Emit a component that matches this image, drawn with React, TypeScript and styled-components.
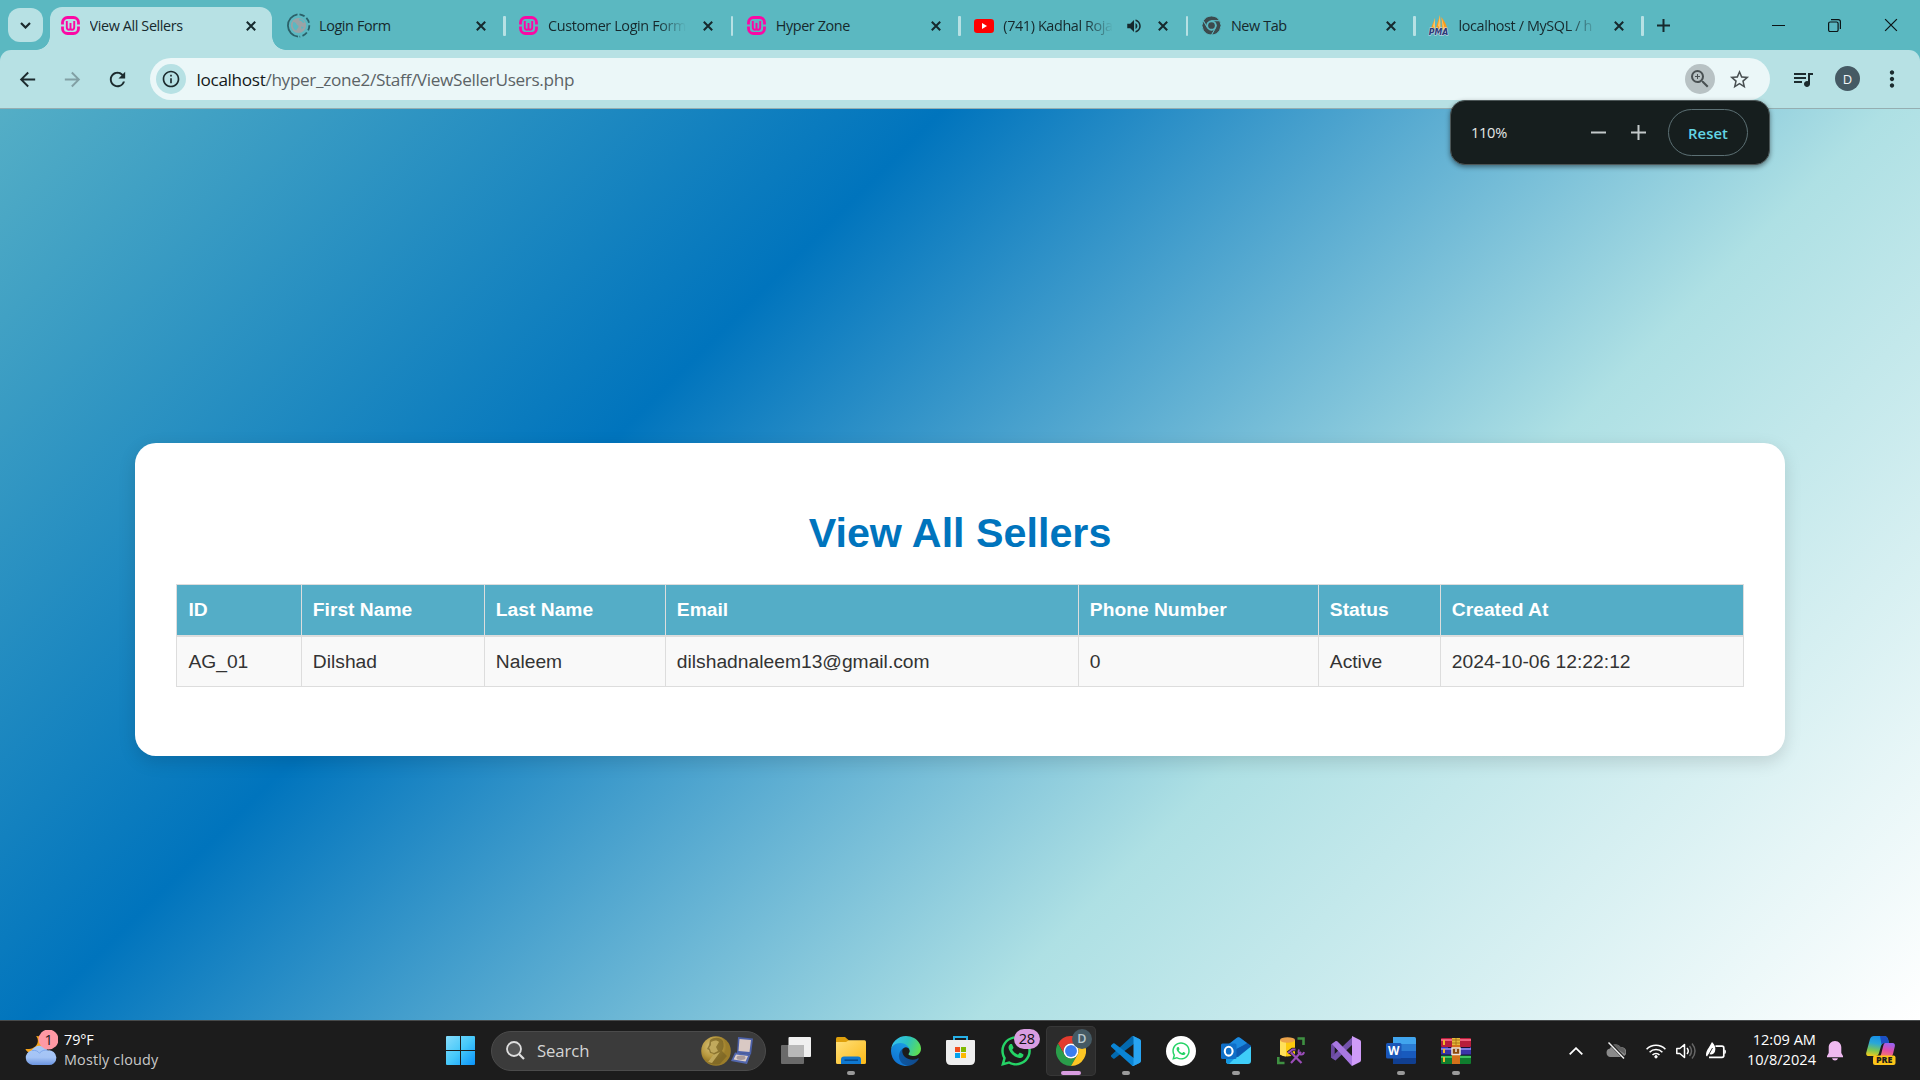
import React from "react";
import styled, { createGlobalStyle, css } from "styled-components";
import {
  MdArrowBack,
  MdArrowForward,
  MdRefresh,
  MdOutlineInfo,
  MdZoomIn,
  MdStarBorder,
  MdQueueMusic,
  MdMoreVert,
  MdVolumeUp,
} from "react-icons/md";
import { FaWhatsapp } from "react-icons/fa";

const uiFont = `"Open Sans", "Noto Sans", sans-serif`;
const pageFont = `"Liberation Sans", Arial, sans-serif`;

const GlobalStyle = createGlobalStyle`
  *, *::before, *::after { box-sizing: border-box; }
  html, body { margin: 0; padding: 0; overflow: hidden; }
  body { width: 1920px; height: 1080px; }
  svg { display: block; flex: none; }
`;

const Screen = styled.div`
  width: 1920px;
  height: 1080px;
  display: flex;
  flex-direction: column;
  position: relative;
  overflow: hidden;
  font-family: ${uiFont};
`;

/* ---------- tab strip ---------- */
const TabStrip = styled.div`
  height: 50px;
  flex: none;
  display: flex;
  background: #5bb8c1;
  color: #16292d;
`;
const TabSearch = styled.div`
  width: 35px;
  height: 34px;
  margin: 8px 7px 0 8px;
  border-radius: 12px;
  background: #b7e1e4;
  display: flex;
  align-items: center;
  justify-content: center;
`;
const tabBase = css`
  display: flex;
  align-items: center;
  flex: none;
`;
const ActiveTab = styled.div`
  ${tabBase}
  position: relative;
  width: 221.5px;
  height: 43px;
  margin: 7px 5.5px 0 0;
  padding: 0 11px 6px 10px;
  border-radius: 12px 12px 0 0;
  background: #b7e1e4;
  &::before,
  &::after {
    content: "";
    position: absolute;
    bottom: 0;
    width: 14px;
    height: 14px;
  }
  &::before {
    left: -14px;
    background: radial-gradient(circle at 0 0, transparent 13.5px, #b7e1e4 14.2px);
  }
  &::after {
    right: -14px;
    background: radial-gradient(circle at 100% 0, transparent 13.5px, #b7e1e4 14.2px);
  }
`;
const Tab = styled.div`
  ${tabBase}
  width: 227.6px;
  height: 50px;
  padding: 1px 13.5px 0 14px;
`;
const TabSeparator = styled.i`
  width: 2.5px;
  height: 20px;
  border-radius: 1px;
  background: #b7e1e4;
  margin: 0 -14.5px 0 12.5px;
  flex: none;
`;
const TabIcon = styled.span<{ $wide?: boolean }>`
  width: ${(p) => (p.$wide ? 25 : 20)}px;
  height: 25px;
  margin-left: ${(p) => (p.$wide ? -5 : 0)}px;
  margin-right: ${(p) => (p.$wide ? -1.5 : 0)}px;
  display: flex;
  align-items: center;
  justify-content: center;
  flex: none;
`;
const TabTitle = styled.span<{ $fade?: boolean }>`
  flex: 1;
  min-width: 0;
  margin: 0 8px 0 9.5px;
  overflow: hidden;
  white-space: nowrap;
  font-size: 14.4px;
  line-height: 24px;
  letter-spacing: -0.38px;
  ${(p) =>
    p.$fade &&
    css`
      mask-image: linear-gradient(90deg, #000 calc(100% - 32px), transparent calc(100% - 4px));
    `}
`;
const Audio = styled.span`
  margin-right: 10px;
`;
const NewTab = styled.div`
  width: 42px;
  display: flex;
  align-items: center;
  justify-content: center;
`;
const WindowButtons = styled.div`
  display: flex;
  align-items: center;
  gap: 43px;
  margin: 0 22px 0 auto;
  color: #0b1416;
`;

/* ---------- toolbar ---------- */
const ToolbarBack = styled.div`
  background: #5bb8c1;
  flex: none;
`;
const Toolbar = styled.div`
  height: 59px;
  border-radius: 11px 11px 0 0;
  background: #b7e1e4;
  border-bottom: 1px solid #95aeb1;
  display: flex;
  align-items: center;
  color: #1c2b2e;
`;
const NavButtons = styled.div`
  display: flex;
  width: 150px;
  padding: 0 0 0 15.5px;
  gap: 22px;
  align-items: center;
`;
const Dim = styled.span`
  color: #82a0a4;
`;
const Omnibox = styled.div`
  width: 1620px;
  height: 42px;
  border-radius: 21px;
  background: #ebf7f8;
  display: flex;
  align-items: center;
  padding: 0 19px 0 6px;
`;
const RoundChip = styled.span<{ $bg: string }>`
  width: 30px;
  height: 30px;
  border-radius: 50%;
  background: ${(p) => p.$bg};
  display: flex;
  align-items: center;
  justify-content: center;
  flex: none;
`;
const Address = styled.span`
  flex: 1;
  margin-left: 10.5px;
  font-size: 17.2px;
  letter-spacing: -0.34px;
  color: #5b6366;
  b {
    font-weight: 400;
    color: #14191a;
  }
`;
const BoxActions = styled.span`
  display: flex;
  align-items: center;
  gap: 13px;
  color: #4a5153;
`;
const ToolActions = styled.div`
  flex: 1;
  display: flex;
  align-items: center;
  padding-left: 20.5px;
`;
const Avatar = styled.span`
  width: 25px;
  height: 25px;
  border-radius: 50%;
  background: #455a64;
  color: #f2f5f6;
  font-size: 13px;
  display: flex;
  align-items: center;
  justify-content: center;
  margin: -1px 19px 0 20.5px;
`;

/* ---------- zoom bubble ---------- */
const ZoomBubble = styled.div`
  position: absolute;
  left: 1450px;
  top: 100px;
  width: 320px;
  height: 65px;
  border-radius: 15px;
  background: #161e1e;
  border: 1px solid #4c5657;
  box-shadow: 0 2px 5px rgba(0, 0, 0, 0.45);
  display: flex;
  align-items: center;
  padding: 0 21px 0 20px;
  color: #e4e8e8;
  font-size: 14.6px;
  letter-spacing: -0.3px;
`;
const ZoomLevel = styled.span`
  padding-bottom: 2px;
`;
const ZoomSteps = styled.span`
  display: flex;
  gap: 25px;
  margin: 0 22px 0 auto;
`;
const ResetButton = styled.span`
  width: 80px;
  height: 47px;
  border: 1px solid #5c7074;
  border-radius: 24px;
  color: #63d5e5;
  font-weight: 600;
  letter-spacing: 0.1px;
  font-size: 14.8px;
  display: flex;
  align-items: center;
  justify-content: center;
`;

/* ---------- web page ---------- */
const Page = styled.main`
  flex: 1;
  background: linear-gradient(135deg, #54aec6, #0074bd, #aee0e4, #ffffff);
  display: flex;
  justify-content: center;
  align-items: flex-start;
  padding-top: 334px;
  font-family: ${pageFont};
`;
const Card = styled.section`
  width: 1650px;
  height: 313px;
  border-radius: 21px;
  background: #fff;
  box-shadow: 0 5.5px 16.5px rgba(0, 0, 0, 0.13);
  padding: 65.5px 41px 0;
  display: flex;
  flex-direction: column;
  align-items: flex-start;
`;
const Heading = styled.h1`
  margin: 0 0 27.5px;
  width: 1568px;
  text-align: center;
  font-size: 41.25px;
  line-height: 48px;
  font-weight: 700;
  color: #0074bd;
`;
const Table = styled.table`
  width: 1568px;
  table-layout: fixed;
  border-collapse: separate;
  border-spacing: 0;
  border-top: 1px solid #ddd;
  border-left: 1px solid #ddd;
  font-size: 19.25px;
  line-height: 22px;
  color: #333;
`;
const cell = css`
  text-align: left;
  padding: 0 0 0 10.8px;
  border-right: 1px solid #ddd;
  &:first-child {
    padding-left: 11.4px;
  }
`;
const Th = styled.th`
  ${cell}
  height: 52px;
  background: #54adc7;
  color: #fff;
  border-bottom: 2px solid #ddd;
`;
const Td = styled.td`
  ${cell}
  height: 50px;
  background: #f9f9f9;
  border-bottom: 1px solid #ddd;
`;

/* ---------- taskbar ---------- */
const Taskbar = styled.footer`
  height: 60px;
  flex: none;
  background: #1c1c1c;
  border-top: 1px solid #474a4b;
  display: flex;
  align-items: center;
  color: #fff;
`;
const Weather = styled.div`
  width: 433px;
  padding-left: 24px;
  display: flex;
  gap: 6px;
  font-size: 14.4px;
  line-height: 20px;
  margin-top: -2px;
`;
const WeatherText = styled.div`
  display: flex;
  flex-direction: column;
  letter-spacing: -0.1px;
  span {
    color: #c9c9c9;
    letter-spacing: 0.17px;
  }
`;
const Slot = styled.div<{ $active?: boolean }>`
  position: relative;
  width: 50px;
  height: 50px;
  margin: 0 2.53px;
  border-radius: 5px;
  display: flex;
  align-items: center;
  justify-content: center;
  flex: none;
  ${(p) =>
    p.$active &&
    css`
      background: #2c2c2c;
      box-shadow: inset 0 0 0 1px #373737;
    `}
`;
const Running = styled.i<{ $active?: boolean }>`
  position: absolute;
  bottom: 1px;
  left: 50%;
  transform: translateX(-50%);
  width: ${(p) => (p.$active ? 20 : 8)}px;
  height: 4px;
  border-radius: 2px;
  background: ${(p) => (p.$active ? "#d89ce0" : "#9a9a9a")};
`;
const CountBadge = styled.span`
  position: absolute;
  left: 23px;
  top: 3.5px;
  width: 26px;
  height: 20px;
  border-radius: 10px;
  background: #d99de2;
  color: #111;
  font-size: 14.5px;
  letter-spacing: -0.3px;
  line-height: 20px;
  text-align: center;
`;
const ProfileBadge = styled.span`
  position: absolute;
  left: 26px;
  top: 3.5px;
  width: 20px;
  height: 20px;
  border-radius: 50%;
  background: #455a64;
  color: #b9c9cf;
  font-size: 12.5px;
  font-weight: 600;
  line-height: 20px;
  text-align: center;
`;
const SearchBox = styled.div`
  width: 275px;
  height: 40px;
  margin: 0 2.6px 0 2.5px;
  border-radius: 20px;
  background: #3b3b3b;
  border: 1px solid #4b4b4b;
  display: flex;
  align-items: center;
  padding: 0 11px 0 14px;
  font-size: 16.7px;
  letter-spacing: -0.1px;
  color: #d5d5d5;
  span {
    flex: 1;
    margin-left: 12.5px;
  }
`;
const Tray = styled.div`
  display: flex;
  align-items: center;
  margin-left: auto;
  padding-right: 24px;
`;
const TrayIcon = styled.span<{ $gap: number }>`
  margin-right: ${(p) => p.$gap}px;
`;
const Clock = styled.div`
  text-align: right;
  font-size: 14.6px;
  line-height: 20px;
  letter-spacing: 0;
  width: 90px;
  margin: -4px 11px 0 0;
`;

/* ---------- drawings ---------- */
const Cross = ({ size = 10, width = 2 }: { size?: number; width?: number }) => (
  <svg width={size} height={size} viewBox="0 0 10 10" stroke="currentColor" strokeWidth={width}>
    <path d="M.8.8l8.4 8.4M9.2.8L.8 9.2" />
  </svg>
);

const WampIcon = () => (
  <svg width="19" height="19" viewBox="0 0 19 19" fill="none" stroke="#fb08a4">
    <path
      d="M1.5 8.500V6.500a5 5 0 0 1 5-5h6a5 5 0 0 1 5 5v2M17.500 10.500v2a5 5 0 0 1-5 5h-6a5 5 0 0 1-5-5v-2"
      strokeWidth="2.800"
    />
    <path d="M5.800 5v6.200q0 2.500 2.200 2.500 1.500 0 1.500-1.700V7v5q0 1.700 1.500 1.700 2.200 0 2.200-2.500V5" strokeWidth="1.900" />
  </svg>
);

const GlobeLoading = () => (
  <svg width="25" height="25" viewBox="0 0 25 25" fill="none">
    <path d="M12 23.700A11.300 11.300 0 0 1 11.500 1.300" stroke="#2b6068" strokeWidth="1.800" />
    <path
      d="M13.500 1.300a11.300 11.300 0 0 1 0 22.400"
      stroke="#2b6068"
      strokeWidth="1.800"
      strokeDasharray="5.500 2.400"
    />
    <circle cx="12.500" cy="12.500" r="7.600" fill="#9aa3a6" />
    <path
      d="M7.200 9c2 0 2.800 1 3.300 2.200s2 .8 2 2.300-1.500 1.500-2 4C8 17 6.300 14 6.800 11zM13.500 6c-1 1.300 0 2 1.200 2s1.300 1.600 2.600 2l1.200-.5C17.600 7.500 16 6 13.500 6zM15 13.500l2.600.4-1.800 2.500z"
      fill="#5bb8c1"
    />
  </svg>
);

const YouTube = () => (
  <svg width="20" height="14" viewBox="0 0 20 14">
    <rect width="20" height="14" rx="3.200" fill="#f00" />
    <path d="M8 4l5 3-5 3z" fill="#fff" />
  </svg>
);

const ChromeLogo = ({ size, mono }: { size: number; mono?: boolean }) => {
  const c = mono ? ["#3c4a4d", "#3c4a4d", "#3c4a4d"] : ["#e33b2e", "#2a9d4a", "#fcc624"];
  const line = mono ? "#5bb8c1" : "none";
  return (
    <svg width={size} height={size} viewBox="0 0 48 48">
      <g stroke={line} strokeWidth={mono ? 2.500 : 0}>
        <path d="M24 12H44.800A24 24 0 0 0 3.200 12L13.600 30A12 12 0 0 1 24 12" fill={c[0]} />
        <path d="M13.600 30L3.200 12A24 24 0 0 0 24 48L34.400 30A12 12 0 0 1 13.600 30" fill={c[1]} />
        <path d="M34.400 30L24 48A24 24 0 0 0 44.800 12H24A12 12 0 0 1 34.400 30" fill={c[2]} />
      </g>
      <circle cx="24" cy="24" r="12" fill={mono ? "#5bb8c1" : "#fff"} />
      <circle cx="24" cy="24" r={mono ? 8.500 : 9.500} fill={mono ? "#3c4a4d" : "#3a7df0"} />
    </svg>
  );
};

const PmaText = styled.text`
  font: italic 700 8px "DejaVu Sans", "Liberation Sans", sans-serif;
`;
const PmaIcon = () => (
  <svg width="20" height="25" viewBox="0 0 20 25" overflow="visible">
    <path d="M6 5L1.500 16.500H6zM11 2L6.500 16l5 .5zM12.500 4c2.500 4 5.500 8 6 12.500h-5.500z" fill="#f89c1c" />
    <path d="M6 5l-2 8 2 3.500zM11 2l-2 10.500 2.500 4zM12.500 4l1.500 12.500h2z" fill="#fcc468" />
    <PmaText
      x="-.2"
      y="22.300"
      textLength="19.500"
      lengthAdjust="spacingAndGlyphs"
      fill="#2b3a78"
      stroke="#d5dbe8"
      strokeWidth="1"
      paintOrder="stroke"
    >
      PMA
    </PmaText>
  </svg>
);

const BadgeText = styled.text`
  font: 400 14.5px ${uiFont};
  text-anchor: middle;
`;
const WeatherIcon = () => (
  <svg width="34" height="40" viewBox="0 0 34 40">
    <defs>
      <linearGradient id="cloud" x1="0" y1="0" x2="0" y2="1">
        <stop offset="0" stopColor="#a9c9f7" />
        <stop offset=".6" stopColor="#a4c3f5" />
        <stop offset="1" stopColor="#6a94e0" />
      </linearGradient>
    </defs>
    <path d="M12 6c4 4 2 14-10.500 13 1 3.500 6 5 11 4l11-5V7z" fill="#f5a31c" />
    <path d="M8.500 35a7.300 7.300 0 0 1-1-14.400A9.300 9.300 0 0 1 23.600 20.400 7.400 7.400 0 1 1 24 35z" fill="url(#cloud)" />
    <path d="M8 20.600c3-.8 6 .4 7.500 2.600 2-2.600 5-3.600 8-2.900" stroke="#7ea7ec" strokeWidth="1" fill="none" />
    <circle cx="24.500" cy="9.500" r="10" fill="#ff99a4" />
    <BadgeText x="24.700" y="14.700" fill="#1c1c1c">
      1
    </BadgeText>
  </svg>
);

const StartIcon = () => (
  <svg width="29" height="29" viewBox="0 0 29 29">
    <defs>
      <linearGradient id="win" x1="0" y1="0" x2="1" y2="1">
        <stop offset="0" stopColor="#86dcfb" />
        <stop offset=".5" stopColor="#46c8fa" />
        <stop offset="1" stopColor="#0a93fa" />
      </linearGradient>
    </defs>
    <path d="M1 0h13v14H0V1q0-1 1-1zM15 0h13q1 0 1 1v13H15zM0 15h14v14H1q-1 0-1-1zM15 15h14v13q0 1-1 1H15z" fill="url(#win)" />
  </svg>
);

const MedalIcon = () => (
  <svg width="30" height="30" viewBox="0 0 30 30">
    <defs>
      <radialGradient id="medal" cx=".35" cy=".35">
        <stop offset="0" stopColor="#d9c37a" />
        <stop offset=".7" stopColor="#b8993f" />
        <stop offset="1" stopColor="#9b7d2a" />
      </radialGradient>
    </defs>
    <circle cx="15" cy="15" r="14.800" fill="url(#medal)" />
    <path d="M9 4c4-3 10-3 13 1 1 4 1 7-1 10l5 5-7 8c-4 1-9 1-12-2l6-8-4-1-1-3-2-1 2-4z" fill="#7a6426" opacity=".75" />
    <path d="M10 6c3-2 6-2 8 0l-3 5 2 4-4 2-3-1-1-3-1-1 2-3zM12 19l7-3-8 11-4-1z" fill="#cdb566" opacity=".8" />
  </svg>
);

const DiplomaIcon = () => (
  <svg width="23" height="28" viewBox="0 0 23 28">
    <path d="M7 0l15 1.500-2 16-14-1.500z" fill="#4c61a8" />
    <path d="M8.500 2l11.500 1-1.500 12-11-1z" fill="#d9c9c4" />
    <path d="M4 15.500l15.500 2-3.500 9.500L0 24z" fill="#5368ae" />
    <path d="M5 17.500l12 1.500-2.500 5.500-12-2z" fill="#ddd0cb" />
    <ellipse cx="10" cy="20.800" rx="4.500" ry="2.200" fill="#a99b9c" />
  </svg>
);

const TaskView = () => (
  <svg width="30" height="27" viewBox="0 0 30 27">
    <rect y="8" width="23" height="19" rx="1" fill="#6a6a6a" />
    <rect x="7.500" width="22.500" height="20" rx="1" fill="#f0f0f0" />
    <path d="M7.500 8H23v12H8.500q-1 0-1-1z" fill="#b8b8b8" />
  </svg>
);

const Folder = () => (
  <svg width="30" height="27" viewBox="0 0 30 27">
    <defs>
      <linearGradient id="fold" x1="0" y1="0" x2="1" y2="1">
        <stop offset="0" stopColor="#ffe07a" />
        <stop offset="1" stopColor="#fbb917" />
      </linearGradient>
    </defs>
    <path d="M0 1.500Q0 0 1.500 0H9l4 3.500V8H0z" fill="#dfa00c" />
    <path d="M0 5h10l3-1.800h15.500Q30 3.200 30 5v20.500q0 1.500-1.500 1.500h-27Q0 27 0 25.500z" fill="url(#fold)" />
    <path d="M5 27v-4.500q0-3 3-3h14q3 0 3 3V27z" fill="#0f78d0" />
    <rect x="8.500" y="22.500" width="13.500" height="1.300" fill="#06407c" />
  </svg>
);

const Edge = () => (
  <svg width="30" height="30" viewBox="0 0 256 256">
    <defs>
      <linearGradient id="ea" x1="0" x2="1">
        <stop offset="0" stopColor="#0c59a4" />
        <stop offset="1" stopColor="#114a8b" />
      </linearGradient>
      <linearGradient id="eb" x1=".8" y1="0" x2=".3" y2="1">
        <stop offset="0" stopColor="#1ba0e4" />
        <stop offset="1" stopColor="#0f6fd0" />
      </linearGradient>
      <linearGradient id="ec" x1="0" y1=".3" x2="1" y2=".6">
        <stop offset="0" stopColor="#35c1f1" />
        <stop offset=".5" stopColor="#2cc3c0" />
        <stop offset="1" stopColor="#5fe04f" />
      </linearGradient>
    </defs>
    <path d="M231 190.500c-3.400 1.800-6.900 3.400-10.500 4.700a101 101 0 0 1-35.900 6.400c-47.300 0-88.500-32.500-88.500-74.300.1-11.400 6.400-21.900 16.400-27.300-42.800 1.800-53.800 46.400-53.800 72.500 0 74 68.100 81.400 82.800 81.400 7.900 0 19.800-2.300 27-4.600l1.300-.4a128.300 128.300 0 0 0 66.600-52.800 4 4 0 0 0-5.400-5.600z" fill="url(#ea)" />
    <path d="M105.700 241.400a79.200 79.200 0 0 1-22.700-21.300 80.700 80.700 0 0 1 29.500-120c3.200-1.500 8.500-4.100 15.600-4a32.400 32.400 0 0 1 25.700 13 31.900 31.900 0 0 1 6.300 18.700c0-.2 24.500-79.600-80-79.600-43.900 0-80 41.700-80 78.200a130.200 130.200 0 0 0 12.100 56 128 128 0 0 0 156.400 67 75.500 75.500 0 0 1-62.800-8z" fill="url(#eb)" />
    <path d="M152.300 148.900c-.8 1-3.300 2.500-3.300 5.700 0 2.600 1.700 5.100 4.700 7.200 14.400 10 41.500 8.700 41.600 8.700 10.700 0 21.100-2.900 30.300-8.300a61.400 61.400 0 0 0 30.400-52.900c.3-22.400-8-37.300-11.300-43.900C223.500 23.900 177.700 0 128 0A128 128 0 0 0 0 126.200c.5-36.500 36.800-66 80-66 3.500 0 23.500.3 42 10a72.600 72.600 0 0 1 30.900 29.300c6.100 10.600 7.200 24.100 7.200 29.500s-2.700 13.300-7.800 19.900z" fill="url(#ec)" />
  </svg>
);

const Store = () => (
  <svg width="29" height="29" viewBox="0 0 29 29">
    <path d="M8 6V1h13v5" fill="none" stroke="#27b1e8" strokeWidth="2" />
    <path d="M0 5q0-1 1-1h27q1 0 1 1v19q0 5-5 5H5q-5 0-5-5z" fill="#eeeeee" />
    <path d="M9 11h5v5H9z" fill="#f04e1f" />
    <path d="M15 11h5v5h-5z" fill="#7fb900" />
    <path d="M9 17h5v5H9z" fill="#04a2ee" />
    <path d="M15 17h5v5h-5z" fill="#fcb900" />
  </svg>
);

const VSCode = () => (
  <svg width="30" height="30" viewBox="0 0 100 100">
    <path d="M96.460 10.800L75.860.880a6.200 6.200 0 0 0-7.100 1.200L1.300 63.600a4.200 4.200 0 0 0 0 6.200l5.500 5a4.200 4.200 0 0 0 5.300.240L93.400 13.500c2.700-2.100 6.600-.1 6.600 3.300z" fill="#0369ae" />
    <path d="M96.460 89.200l-20.600 9.900a6.200 6.200 0 0 1-7.100-1.200L1.300 36.400a4.200 4.200 0 0 1 0-6.200l5.500-5a4.200 4.200 0 0 1 5.300-.240L93.400 86.600c2.700 2.100 6.600.1 6.600-3.300z" fill="#0a84d4" />
    <path d="M75.860 99.130a6.200 6.200 0 0 1-7.100-1.200c2.300 2.300 6.250.670 6.250-2.600V4.670c0-3.260-3.950-4.900-6.250-2.600a6.200 6.200 0 0 1 7.100-1.200l20.600 9.900A6.250 6.250 0 0 1 100 16.400v67.200a6.250 6.250 0 0 1-3.540 5.630z" fill="#28a4f2" />
  </svg>
);

const WhatsAppDisc = styled.span`
  width: 30px;
  height: 30px;
  border-radius: 50%;
  background: #fff;
  display: flex;
  align-items: center;
  justify-content: center;
`;

const Letter = styled.text`
  font: 700 13px ${uiFont};
  fill: #fff;
  text-anchor: middle;
`;

const Outlook = () => (
  <svg width="30" height="27" viewBox="0 0 30 27">
    <path d="M5 9L16 .8q1.500-1 3 0L30 9v4L17 22 5 14z" fill="#0f5fb0" />
    <path d="M7 8L16 .8q1.500-1 3 0L26 6 13 14z" fill="#1c8be0" />
    <path d="M30 9.500V24q0 3-3 3H8q-3 0-3-3v-3l12-1z" fill="#3fcdf8" />
    <path d="M30 9L15 20l-10 1v-4l8-4 14-6.500z" fill="#0b58b0" />
    <path d="M15 20l-7 7q-3 0-3-3v-4z" fill="#1496e0" />
    <rect y="6.500" width="15.500" height="15.500" rx="1.500" fill="#0f6fc8" />
    <ellipse cx="7.700" cy="14.200" rx="3.900" ry="4.400" fill="none" stroke="#fff" strokeWidth="2.100" />
  </svg>
);

const DbTools = () => (
  <svg width="28" height="28" viewBox="0 0 28 28">
    <path d="M3 3v14.500q7 4 15 0V3z" fill="#fcc90e" />
    <path d="M3 3v14.500q3 2 6 2V3z" fill="#ffe05a" />
    <ellipse cx="10.500" cy="3" rx="7.500" ry="2.700" fill="#eba34a" />
    <path d="M20.500 1.500h6V8M7.500 26H1.300v-6" fill="none" stroke="#3f9142" strokeWidth="2.600" />
    <path d="M14 26l10-11M14 16l10.500 10M11 16l4.500-3.500h3" fill="none" stroke="#1c1c1c" strokeWidth="3.600" />
    <path d="M14 26l10-11M14 15.500l10.500 10.500M11 16l4.500-3.500h3" fill="none" stroke="#9a4db8" strokeWidth="2.200" />
    <path d="M22 12.500q-1.500 3.500 1.500 5 3 .5 3.500-2.500" fill="none" stroke="#9a4db8" strokeWidth="1.800" />
  </svg>
);

const VisualStudio = () => (
  <svg width="30" height="30" viewBox="0 0 30 30">
    <path d="M0 8.500l4.500-3V9L3.500 10.500v9L4.500 21v3.500L0 21.500z" fill="#5c3f92" />
    <path d="M4.500 24.500L0 21.500l22-21L21 9z" fill="#7352ab" />
    <path d="M0 8.500L4.500 5.300 6 5.500 21 21v9L3.500 10.500v9L0 21.500z" fill="#6b489f" />
    <path d="M1 8L4.500 5.300q1-.5 2 .3L21 20v10z" fill="#a878e0" />
    <path d="M21 0l8 4q1 .5 1 2v18q0 1.500-1 2l-8 4z" fill="#cf9bf8" />
  </svg>
);

const Word = () => (
  <svg width="30" height="27" viewBox="0 0 30 27">
    <path d="M7 0h21.500Q30 0 30 1.500V7H7z" fill="#41a5ee" />
    <path d="M7 7h23v7H7z" fill="#2b7cd3" />
    <path d="M7 14h23v7H7z" fill="#185abd" />
    <path d="M7 21h23v4.500q0 1.500-1.500 1.500H7z" fill="#103f91" />
    <rect y="6" width="15.500" height="15.500" rx="1.500" fill="#1a56b8" />
    <Letter x="7.700" y="18.300" textLength="11.500" lengthAdjust="spacingAndGlyphs">
      W
    </Letter>
  </svg>
);

const WinRar = () => (
  <svg width="30" height="26" viewBox="0 0 30 26">
    <rect y="0" width="30" height="9" rx="1" fill="#b81e3c" />
    <rect y="1" width="30" height="2" fill="#f0607c" />
    <rect y="9" width="30" height="8" fill="#3a35a8" />
    <rect y="10" width="30" height="2" fill="#7d7ae0" />
    <rect y="17" width="30" height="9" rx="1" fill="#0f7d2e" />
    <rect y="18" width="30" height="2" fill="#3fc25c" />
    <path d="M2 2h2v5H2zM2 11h2v4H2zM2 19h2v5H2z" fill="#f2b92c" />
    <path d="M7 9h22v1H7zM0 16.500h30v1H0z" fill="#191036" />
    <rect x="11" width="8" height="26" fill="#d3711a" />
    <path d="M11 0h8v7h-8z" fill="#e6b93a" />
    <path d="M11 2h8M11 5h8M15 0v7" stroke="#9c6a12" strokeWidth=".8" />
    <rect x="11" y="10" width="8" height="6.500" fill="#8a4a10" stroke="#ece4dc" strokeWidth="1.500" />
    <path d="M15 11v3" stroke="#fff" strokeWidth="1.300" />
  </svg>
);

const CloudOff = () => (
  <svg width="20" height="17" viewBox="0 0 20 17">
    <path d="M4.500 15A4.300 4.300 0 0 1 4 6.500 6 6 0 0 1 14.500 5 5 5 0 0 1 16 15z" fill="#8a8a8a" />
    <path d="M6 3.500A6 6 0 0 1 14.500 5 5 5 0 0 1 19 12z" fill="#606060" />
    <path d="M3 .5l15.500 16" stroke="#1c1c1c" strokeWidth="3" />
    <path d="M2.500.5L18 16.500" stroke="#f4f4f4" strokeWidth="1.400" />
  </svg>
);

const Wifi = () => (
  <svg width="20" height="16" viewBox="0 0 20 16" fill="none" stroke="#fff" strokeWidth="1.600">
    <path d="M.6 6.200a13.300 13.300 0 0 1 18.800 0M3.600 9.200a9 9 0 0 1 12.800 0M6.500 12a5 5 0 0 1 7 0" />
    <circle cx="10" cy="13.800" r="1.200" fill="#fff" strokeWidth="1" />
  </svg>
);

const Volume = () => (
  <svg width="20" height="18" viewBox="0 0 20 18" fill="none" strokeWidth="1.500">
    <path d="M.8 6.500h3L8.500 2.500v13L3.800 11.500h-3z" stroke="#fff" strokeLinejoin="round" />
    <path d="M11 6q2.500 3 0 6" stroke="#fff" />
    <path d="M13.500 4q4 5 0 10M16 1.500q6 7.500 0 15" stroke="#666" />
  </svg>
);

const Battery = () => (
  <svg width="20" height="18" viewBox="0 0 20 18" fill="none">
    <path d="M9.500 4.200H16q1.800 0 1.800 1.800v7.500q0 1.800-1.800 1.800H3" stroke="#fff" strokeWidth="1.700" />
    <path d="M18.300 7.500q1.700 0 1.700 2.200t-1.700 2.200z" fill="#fff" />
    <path d="M6 0c3 3 4 6 3 9.500C8 12.500 5 13 3 12L1 14.500 0 13.500C0 8 2.500 7 6 0z" fill="#fff" />
    <path d="M2 14l4.500-8" stroke="#1c1c1c" strokeWidth=".9" />
  </svg>
);

const Bell = () => (
  <svg width="16" height="20" viewBox="0 0 16 20" fill="#efb9f0">
    <path d="M8 0c4 0 6.300 3 6.300 6.500V12l1.700 3v1.200H0V15l1.700-3V6.500C1.700 3 4 0 8 0z" />
    <path d="M5 17.200h6q-.6 2.300-3 2.300t-3-2.300z" />
  </svg>
);

const PreText = styled.text`
  font: 800 8px ${uiFont};
  text-anchor: middle;
`;
const Copilot = () => (
  <svg width="30" height="29" viewBox="0 0 30 29">
    <defs>
      <linearGradient id="ca" x1=".4" y1="0" x2=".2" y2="1">
        <stop offset="0" stopColor="#1791e8" />
        <stop offset=".35" stopColor="#2aa7d8" />
        <stop offset=".7" stopColor="#7cc653" />
        <stop offset="1" stopColor="#f2cb1d" />
      </linearGradient>
      <linearGradient id="cb" x1=".6" y1="0" x2=".3" y2="1">
        <stop offset="0" stopColor="#9a62f0" />
        <stop offset=".5" stopColor="#e04da8" />
        <stop offset="1" stopColor="#f98063" />
      </linearGradient>
    </defs>
    <path d="M8 0h10q3 0 4 3l1 4h-5q-2 0-3 3l-2 7q-.8 3-3.500 3H3q-3.500 0-2.700-3.500L4 3q1-3 4-3z" fill="url(#ca)" />
    <path d="M14 0h4q3 0 4 3l1 4h-5q-1.500 0-2.500 1.500z" fill="#1c4fc4" />
    <path d="M19 7h7.500q3 0 2.300 3.500L27 18q-1 3-4 3H12q2.500 0 3.200-3l2-8q.6-3 1.800-3z" fill="url(#cb)" />
    <rect x="7" y="19.500" width="22.500" height="9.500" rx="2" fill="#fcc419" />
    <PreText x="18.200" y="27.200" textLength="16.500" lengthAdjust="spacingAndGlyphs" fill="#1c1c1c">
      PRE
    </PreText>
  </svg>
);

/* ---------- data ---------- */
type TabInfo = { title: string; icon: React.ReactNode; wide?: boolean; fade?: boolean; audio?: boolean };
const tabs: TabInfo[] = [
  { title: "Login Form", icon: <GlobeLoading />, wide: true },
  { title: "Customer Login Form", icon: <WampIcon />, fade: true },
  { title: "Hyper Zone", icon: <WampIcon /> },
  { title: "(741) Kadhal Roja", icon: <YouTube />, fade: true, audio: true },
  { title: "New Tab", icon: <ChromeLogo size={19} mono /> },
  { title: "localhost / MySQL / h", icon: <PmaIcon />, fade: true },
];

const columns = [
  { label: "ID", value: "AG_01", width: 125 },
  { label: "First Name", value: "Dilshad", width: 183 },
  { label: "Last Name", value: "Naleem", width: 181 },
  { label: "Email", value: "dilshadnaleem13@gmail.com", width: 413 },
  { label: "Phone Number", value: "0", width: 240 },
  { label: "Status", value: "Active", width: 122 },
  { label: "Created At", value: "2024-10-06 12:22:12", width: 303 },
];

export default function App() {
  return (
    <Screen>
      <GlobalStyle />
      <TabStrip>
        <TabSearch>
          <svg width="11" height="7" viewBox="0 0 11 7" fill="none" stroke="#1b2a2d" strokeWidth="2.200">
            <path d="M1 1l4.500 4.500L10 1" />
          </svg>
        </TabSearch>
        <ActiveTab>
          <TabIcon>
            <WampIcon />
          </TabIcon>
          <TabTitle>View All Sellers</TabTitle>
          <TabIcon>
            <Cross />
          </TabIcon>
        </ActiveTab>
        {tabs.map((t) => (
          <Tab key={t.title}>
            <TabIcon $wide={t.wide}>{t.icon}</TabIcon>
            <TabTitle $fade={t.fade}>{t.title}</TabTitle>
            {t.audio && (
              <Audio>
                <MdVolumeUp size={18} />
              </Audio>
            )}
            <TabIcon>
              <Cross />
            </TabIcon>
            <TabSeparator />
          </Tab>
        ))}
        <NewTab>
          <svg width="13" height="13" viewBox="0 0 13 13" stroke="currentColor" strokeWidth="2">
            <path d="M6.500 0v13M0 6.500h13" />
          </svg>
        </NewTab>
        <WindowButtons>
          <svg width="13" height="13" viewBox="0 0 13 13" stroke="currentColor">
            <path d="M0 6.500h13" />
          </svg>
          <svg width="13" height="13" viewBox="0 0 13 13" fill="none" stroke="currentColor" strokeWidth="1.200">
            <rect x=".6" y="3" width="9.500" height="9.500" rx="1.500" />
            <path d="M3 .7h7.300q2.100 0 2.100 2.100V10" />
          </svg>
          <Cross size={14} width={0.9} />
        </WindowButtons>
      </TabStrip>

      <ToolbarBack>
        <Toolbar>
          <NavButtons>
            <MdArrowBack size={23} />
            <Dim>
              <MdArrowForward size={23} />
            </Dim>
            <MdRefresh size={23} />
          </NavButtons>
          <Omnibox>
            <RoundChip $bg="#b7e1e4">
              <MdOutlineInfo size={20} />
            </RoundChip>
            <Address>
              <b>localhost</b>/hyper_zone2/Staff/ViewSellerUsers.php
            </Address>
            <BoxActions>
              <RoundChip $bg="#b8c2c4">
                <MdZoomIn size={24} />
              </RoundChip>
              <MdStarBorder size={23} />
            </BoxActions>
          </Omnibox>
          <ToolActions>
            <MdQueueMusic size={24} />
            <Avatar>D</Avatar>
            <MdMoreVert size={26} />
          </ToolActions>
        </Toolbar>
      </ToolbarBack>

      <Page>
        <Card>
          <Heading>View All Sellers</Heading>
          <Table>
            <colgroup>
              {columns.map((c) => (
                <col key={c.label} width={c.width} />
              ))}
            </colgroup>
            <thead>
              <tr>
                {columns.map((c) => (
                  <Th key={c.label}>{c.label}</Th>
                ))}
              </tr>
            </thead>
            <tbody>
              <tr>
                {columns.map((c) => (
                  <Td key={c.label}>{c.value}</Td>
                ))}
              </tr>
            </tbody>
          </Table>
        </Card>
      </Page>

      <Taskbar>
        <Weather>
          <WeatherIcon />
          <WeatherText>
            79°F
            <span>Mostly cloudy</span>
          </WeatherText>
        </Weather>
        <Slot>
          <StartIcon />
        </Slot>
        <SearchBox>
          <svg width="19" height="19" viewBox="0 0 19 19" fill="none" stroke="#dedede">
            <circle cx="8" cy="8" r="7" strokeWidth="1.800" fill="#555" />
            <path d="M13 13l5 5" strokeWidth="2.200" />
          </svg>
          <span>Search</span>
          <MedalIcon />
          <DiplomaIcon />
        </SearchBox>
        <Slot>
          <TaskView />
        </Slot>
        <Slot>
          <Folder />
          <Running />
        </Slot>
        <Slot>
          <Edge />
        </Slot>
        <Slot>
          <Store />
        </Slot>
        <Slot>
          <FaWhatsapp size={34} color="#25d366" />
          <CountBadge>28</CountBadge>
        </Slot>
        <Slot $active>
          <ChromeLogo size={30} />
          <ProfileBadge>D</ProfileBadge>
          <Running $active />
        </Slot>
        <Slot>
          <VSCode />
          <Running />
        </Slot>
        <Slot>
          <WhatsAppDisc>
            <FaWhatsapp size={20} color="#25d366" />
          </WhatsAppDisc>
        </Slot>
        <Slot>
          <Outlook />
          <Running />
        </Slot>
        <Slot>
          <DbTools />
        </Slot>
        <Slot>
          <VisualStudio />
        </Slot>
        <Slot>
          <Word />
          <Running />
        </Slot>
        <Slot>
          <WinRar />
          <Running />
        </Slot>
        <Tray>
          <TrayIcon $gap={23}>
            <svg width="14" height="8" viewBox="0 0 14 8" fill="none" stroke="#fff" strokeWidth="1.800">
              <path d="M.7 7.300L7 1.200l6.300 6.100" />
            </svg>
          </TrayIcon>
          <TrayIcon $gap={20}>
            <CloudOff />
          </TrayIcon>
          <TrayIcon $gap={10}>
            <Wifi />
          </TrayIcon>
          <TrayIcon $gap={10}>
            <Volume />
          </TrayIcon>
          <TrayIcon $gap={0}>
            <Battery />
          </TrayIcon>
          <Clock>
            12:09 AM
            <br />
            10/8/2024
          </Clock>
          <TrayIcon $gap={23}>
            <Bell />
          </TrayIcon>
          <Copilot />
        </Tray>
      </Taskbar>

      <ZoomBubble>
        <ZoomLevel>110%</ZoomLevel>
        <ZoomSteps>
          <svg width="15" height="15" viewBox="0 0 15 15" stroke="#c3c9ca" strokeWidth="2">
            <path d="M0 7.500h15" />
          </svg>
          <svg width="15" height="15" viewBox="0 0 15 15" stroke="#c3c9ca" strokeWidth="2">
            <path d="M7.500 0v15M0 7.500h15" />
          </svg>
        </ZoomSteps>
        <ResetButton>Reset</ResetButton>
      </ZoomBubble>
    </Screen>
  );
}
